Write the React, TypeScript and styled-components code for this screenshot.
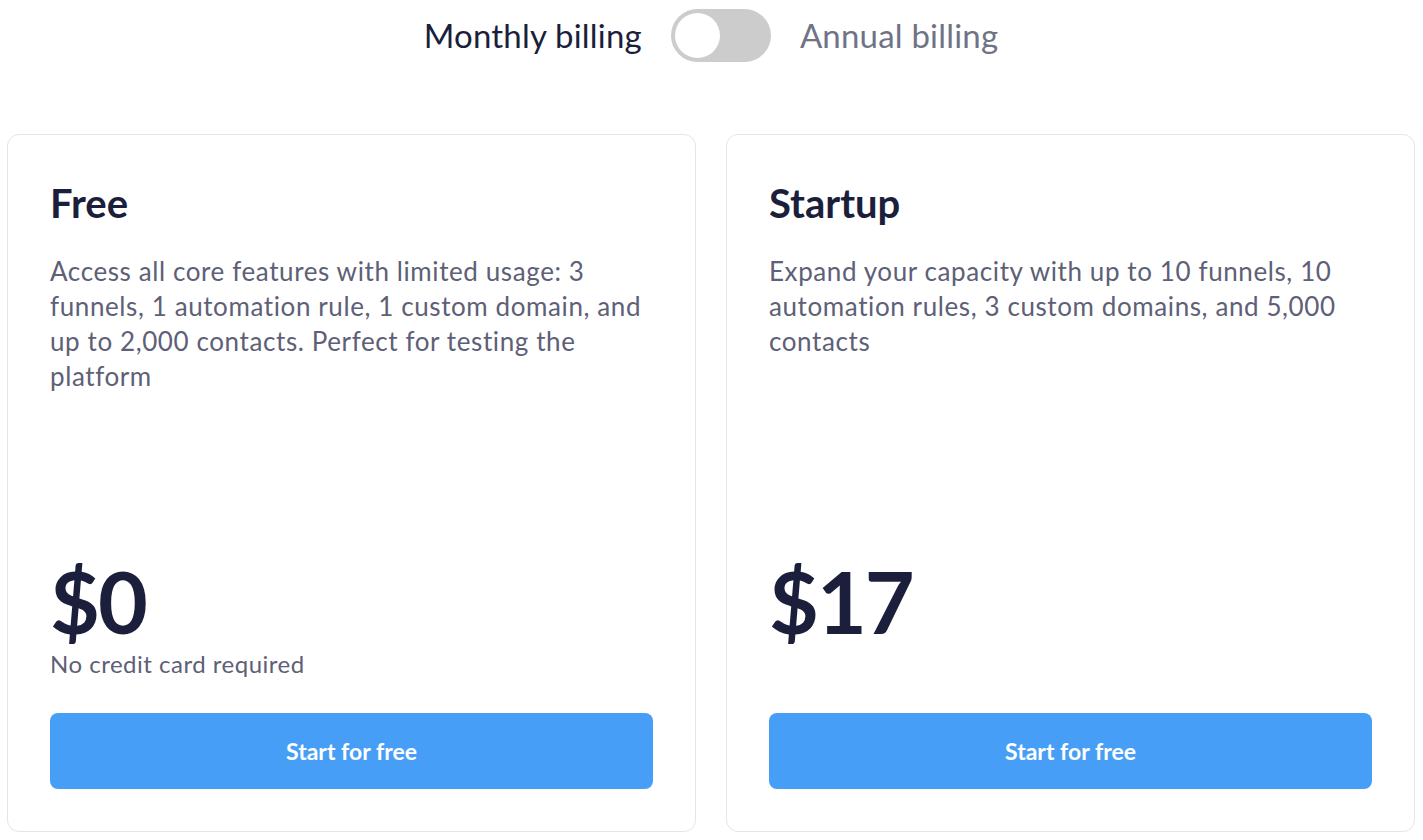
import React, { useState } from 'react'
import styled, { createGlobalStyle } from 'styled-components'

type Plan = {
  name: string
  description: string
  price: string
  note?: string
}

const plans: Plan[] = [
  {
    name: 'Free',
    description:
      'Access all core features with limited usage: 3 funnels, 1 automation rule, 1 custom domain, and up to 2,000 contacts. Perfect for testing the platform',
    price: '$0',
    note: 'No credit card required',
  },
  {
    name: 'Startup',
    description:
      'Expand your capacity with up to 10 funnels, 10 automation rules, 3 custom domains, and 5,000 contacts',
    price: '$17',
  },
]

const App = () => {
  const [annual, setAnnual] = useState(false)

  return (
    <>
      <GlobalStyle />
      <Page>
        <BillingRow>
          <BillingLabel active={!annual}>Monthly billing</BillingLabel>
          <Toggle on={annual} onClick={() => setAnnual(!annual)} aria-label="Toggle billing">
            <Knob on={annual} />
          </Toggle>
          <BillingLabel active={annual}>Annual billing</BillingLabel>
        </BillingRow>

        <CardGrid>
          {plans.map((plan) => (
            <Card key={plan.name}>
              <PlanName>{plan.name}</PlanName>
              <PlanDescription>{plan.description}</PlanDescription>
              <Price>{plan.price}</Price>
              <PriceNote>{plan.note ?? '\u00a0'}</PriceNote>
              <StartButton>Start for free</StartButton>
            </Card>
          ))}
        </CardGrid>
      </Page>
    </>
  )
}

export default App

const GlobalStyle = createGlobalStyle`
  * {
    box-sizing: border-box;
  }
  body {
    margin: 0;
    background: #ffffff;
    font-family: 'Lato', 'Noto Sans', sans-serif;
    -webkit-font-smoothing: antialiased;
  }
`
const Page = styled.div`
  padding: 7px 8px 0 7px;
`
const BillingRow = styled.div`
  display: flex;
  align-items: center;
  justify-content: center;
  gap: 29px;
  height: 56px;
`
const BillingLabel = styled.span<{ active: boolean }>`
  font-size: 33px;
  font-weight: 400;
  letter-spacing: 0.2px;
  color: ${(p) => (p.active ? '#1b1f3b' : '#6f7386')};
`
const Toggle = styled.button<{ on: boolean }>`
  position: relative;
  width: 100px;
  height: 53px;
  border: none;
  border-radius: 27px;
  padding: 0;
  cursor: pointer;
  background: ${(p) => (p.on ? '#479ef7' : '#cccccc')};
`
const Knob = styled.span<{ on: boolean }>`
  position: absolute;
  top: 4px;
  left: ${(p) => (p.on ? '52px' : '4px')};
  width: 45px;
  height: 45px;
  border-radius: 50%;
  background: #ffffff;
`
const CardGrid = styled.div`
  display: grid;
  grid-template-columns: 1fr 1fr;
  gap: 30px;
  margin-top: 71px;
`
const Card = styled.div`
  display: flex;
  flex-direction: column;
  height: 698px;
  padding: 44px 42px 42px 42px;
  border: 1px solid #e4e5e8;
  border-radius: 12px;
  background: #ffffff;
`
const PlanName = styled.h2`
  margin: 0;
  font-size: 40px;
  line-height: 48px;
  font-weight: 700;
  color: #1b1f3b;
`
const PlanDescription = styled.p`
  flex: 1;
  margin: 27px 0 0 0;
  font-size: 26px;
  line-height: 35px;
  letter-spacing: 0.6px;
  color: #5d6076;
`
const Price = styled.div`
  font-size: 86px;
  line-height: 84px;
  font-weight: 700;
  letter-spacing: -2px;
  color: #1b1f3b;
`
const PriceNote = styled.div`
  margin-top: 6px;
  font-size: 24px;
  line-height: 30px;
  letter-spacing: 0.5px;
  color: #5d6076;
`
const StartButton = styled.button`
  margin-top: 34px;
  flex-shrink: 0;
  height: 76px;
  width: 100%;
  border: none;
  border-radius: 8px;
  background: #479ef7;
  color: #ffffff;
  font-family: inherit;
  font-size: 23px;
  font-weight: 700;
  cursor: pointer;
`
